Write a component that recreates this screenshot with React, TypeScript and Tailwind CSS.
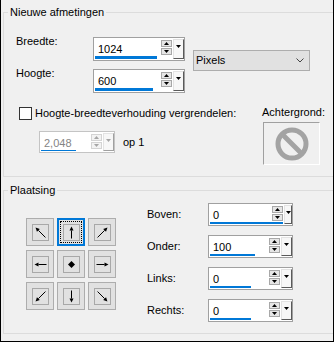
import React from "react"

type SpinProps = {
  value: string
  size: string
  bar: string
  disabled?: boolean
}

function Tri({ up, color }: { up?: boolean; color: string }) {
  return (
    <svg width="5" height="3" viewBox="0 0 5 3">
      <polygon points={up ? "2.5,0 5,3 0,3" : "0,0 5,0 2.5,3"} fill={color} />
    </svg>
  )
}

function Spin({ value, size, bar, disabled }: SpinProps) {
  const ink = disabled ? "#a6a6a6" : "#000000"
  const btn = disabled
    ? "border-[#d4d4d4] bg-[#f3f3f3]"
    : "border-[#a8a8a8] bg-[#e6e6e6]"
  return (
    <div
      className={`flex border bg-white py-[1px] pl-[1px] ${disabled ? "border-[#c4c4c4]" : "border-[#a0a0a0]"} ${size}`}
    >
      <div className="flex flex-1 flex-col">
        <div className="flex flex-1">
          <span className={`flex-1 pl-[3px] pt-[4px] ${disabled ? "text-[#848484]" : ""}`}>{value}</span>
          <div className="flex flex-col gap-[1px] pt-[1px]">
            <div className={`flex h-[7px] w-[11px] items-center justify-center border ${btn}`}>
              <Tri up color={ink} />
            </div>
            <div className={`flex h-[7px] w-[11px] items-center justify-center border ${btn}`}>
              <Tri color={ink} />
            </div>
          </div>
        </div>
        <div className={`h-[3px] bg-[#0078d7] ${bar}`} />
      </div>
      <div
        className={`ml-[1px] flex w-[11px] justify-center border border-l-[#e3e3e3] border-t-[#e3e3e3] bg-[#f7f7f7] pt-[5px] ${disabled ? "border-b-[#a0a0a0] border-r-[#a0a0a0]" : "border-b-[#5a5a5a] border-r-[#5a5a5a]"}`}
      >
        <Tri color={ink} />
      </div>
    </div>
  )
}

function Arrow({ dx, dy }: { dx: number; dy: number }) {
  if (dx === 0 && dy === 0) {
    return (
      <svg width="15" height="15" viewBox="0 0 15 15">
        <polygon points="7.5,4 11,7.5 7.5,11 4,7.5" fill="#000" />
      </svg>
    )
  }
  const diag = dx !== 0 && dy !== 0
  const len = Math.hypot(dx, dy)
  const ux = dx / len
  const uy = dy / len
  const h = diag ? 7 : 6
  const tx = 7.5 + ux * h
  const ty = 7.5 + uy * h
  const sx = 7.5 - ux * h
  const sy = 7.5 - uy * h
  const bx = tx - ux * 4
  const by = ty - uy * 4
  const px = -uy * 2
  const py = ux * 2
  return (
    <svg width="15" height="15" viewBox="0 0 15 15">
      <line x1={sx} y1={sy} x2={bx} y2={by} stroke="#000" strokeWidth="1" />
      <polygon points={`${tx},${ty} ${bx + px},${by + py} ${bx - px},${by - py}`} fill="#000" />
    </svg>
  )
}

const dirs = [
  { dx: -1, dy: -1 },
  { dx: 0, dy: -1, selected: true },
  { dx: 1, dy: -1 },
  { dx: -1, dy: 0 },
  { dx: 0, dy: 0 },
  { dx: 1, dy: 0 },
  { dx: -1, dy: 1 },
  { dx: 0, dy: 1 },
  { dx: 1, dy: 1 },
]

const margins = [
  { label: "Boven:", value: "0", bar: "w-[73px]" },
  { label: "Onder:", value: "100", bar: "w-[45px]" },
  { label: "Links:", value: "0", bar: "w-[41px]" },
  { label: "Rechts:", value: "0", bar: "w-[41px]" },
]

function PlaceButton({ dx, dy, selected }: { dx: number; dy: number; selected?: boolean }) {
  const inner = (
    <div className="flex h-[17px] w-[17px] items-center justify-center border border-[#a8a8a8]">
      <Arrow dx={dx} dy={dy} />
    </div>
  )
  if (selected) {
    return (
      <div className="flex h-[28px] w-[28px] border-2 border-[#0078d7] bg-[#e1e1e1] p-[1px]">
        <div className="flex flex-1 items-center justify-center border border-dotted border-black">{inner}</div>
      </div>
    )
  }
  return (
    <div className="flex h-[28px] w-[28px] items-center justify-center border border-[#adadad] bg-[#e1e1e1]">
      {inner}
    </div>
  )
}

export default function App() {
  return (
    <div className="flex h-[342px] w-[334px] flex-col overflow-hidden border-x border-b border-black bg-[#f0f0f0] font-['Liberation_Sans',Arial,sans-serif] text-[11px] leading-[13px] text-black">
      <fieldset className="ml-[2px] mt-[6px] h-[171px] w-[340px] shrink-0 border border-[#dcdcdc]">
        <legend className="ml-[4px] px-[2px]">Nieuwe afmetingen</legend>
        <div className="flex pl-[12px] pt-[18px]">
          <div className="flex flex-col gap-[8px]">
            <div className="flex items-start">
              <span className="-mt-[2px] w-[77px]">Breedte:</span>
              <Spin value="1024" size="h-[24px] w-[92px]" bar="w-[62px]" />
            </div>
            <div className="flex items-start">
              <span className="-mt-[2px] w-[77px]">Hoogte:</span>
              <Spin value="600" size="h-[24px] w-[92px]" bar="w-[58px]" />
            </div>
          </div>
          <div className="ml-[8px] mt-[13px] flex h-[21px] w-[117px] items-center border border-[#adadad] bg-[#e1e1e1] pl-[2px] pr-[5px]">
            <span className="flex-1">Pixels</span>
            <svg width="8" height="5" viewBox="0 0 8 5">
              <polyline points="0.5,0.5 4,4 7.5,0.5" fill="none" stroke="#444" strokeWidth="1" />
            </svg>
          </div>
        </div>
        <div className="mt-[14px] flex pl-[15px]">
          <div className="flex w-[243px] flex-col">
            <label className="flex h-[13px] items-center">
              <span className="h-[13px] w-[13px] border border-[#333333] bg-white" />
              <span className="ml-[3px]">Hoogte-breedteverhouding vergrendelen:</span>
            </label>
            <div className="ml-[20px] mt-[11px] flex items-center">
              <Spin disabled value="2,048" size="h-[22px] w-[76px]" bar="w-[35px]" />
              <span className="ml-[8px]">op 1</span>
            </div>
          </div>
          <div className="-mt-[1px] flex flex-col">
            <span>Achtergrond:</span>
            <div className="ml-[1px] mt-[3px] flex h-[43px] w-[57px] items-center justify-center border border-b-white border-l-[#a0a0a0] border-r-white border-t-[#a0a0a0]">
              <svg width="36" height="36" viewBox="0 0 36 36">
                <circle cx="18" cy="18" r="14" fill="none" stroke="#a3a3a3" strokeWidth="5" />
                <line x1="8" y1="8" x2="28" y2="28" stroke="#a3a3a3" strokeWidth="5" />
              </svg>
            </div>
          </div>
        </div>
      </fieldset>

      <fieldset className="ml-[2px] mt-[7px] h-[150px] w-[340px] shrink-0 border border-[#dcdcdc]">
        <legend className="ml-[4px] px-[2px]">Plaatsing</legend>
        <div className="flex">
          <div className="ml-[22px] mt-[21px] grid grid-cols-[repeat(3,28px)] gap-x-[3px] gap-y-[4px] self-start">
            {dirs.map((d, i) => (
              <PlaceButton key={i} dx={d.dx} dy={d.dy} selected={d.selected} />
            ))}
          </div>
          <div className="ml-[31px] mt-[6px] flex flex-col gap-[9px]">
            {margins.map((m, i) => (
              <div key={i} className="flex items-center">
                <span className="w-[61px]">{m.label}</span>
                <Spin value={m.value} size="h-[23px] w-[85px]" bar={m.bar} />
              </div>
            ))}
          </div>
        </div>
      </fieldset>
    </div>
  )
}
